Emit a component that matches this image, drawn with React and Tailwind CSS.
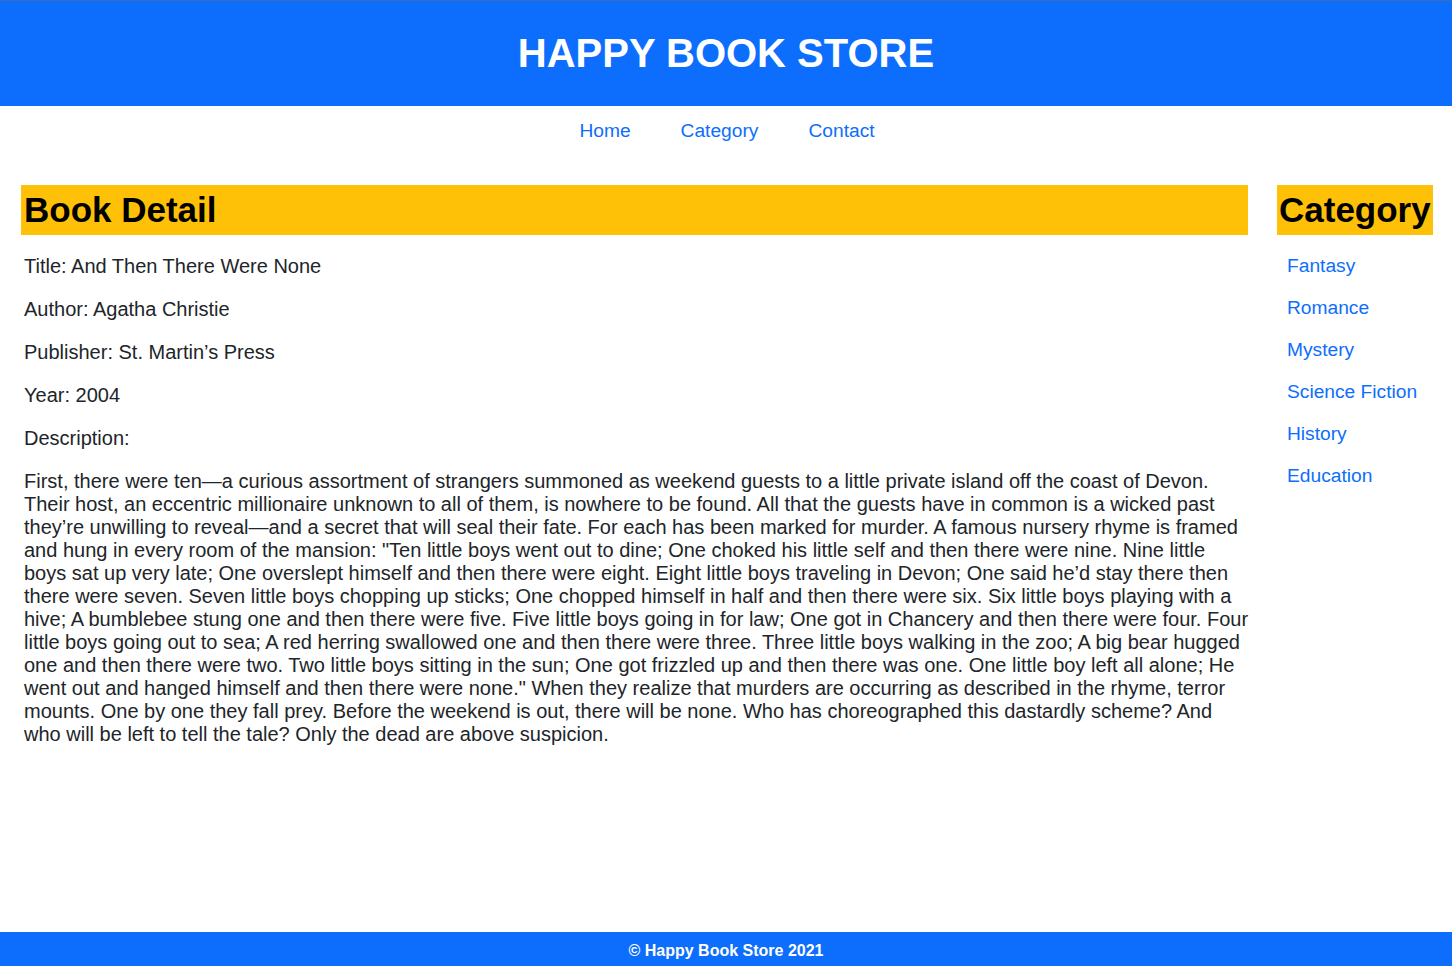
export default function App() {
  const cats = ["Fantasy", "Romance", "Mystery", "Science Fiction", "History", "Education"];
  const font = { fontFamily: '"Liberation Sans", Arial, sans-serif' };
  return (
    <div className="min-h-screen flex flex-col bg-white text-[#212529]" style={font}>
      <header className="h-[106px] bg-[#0d6efd] border-t border-[#3b6db3] flex items-center justify-center">
        <h1 className="text-[40px] font-bold text-white leading-[46px] m-0 -mt-[2px]">HAPPY BOOK STORE</h1>
      </header>
      <nav className="h-[49px] flex items-center justify-center gap-[50px] text-[19.2px] leading-[22px] text-[#0d6efd]">
        <a href="#" className="ml-[2px]">Home</a>
        <a href="#">Category</a>
        <a href="#">Contact</a>
      </nav>
      <main className="flex items-start pl-[21px] pr-[19px] mt-[30px] gap-[29px]">
        <section className="flex-1 min-w-0">
          <h2 className="bg-[#ffc107] text-black font-bold text-[35px] leading-[40px] py-[5px] px-[3px]">Book Detail</h2>
          <div className="pl-[3px] -mr-[2px] text-[20px] leading-[23px]">
            <p className="mt-[20px]">Title: And Then There Were None</p>
            <p className="mt-[20px]">Author: Agatha Christie</p>
            <p className="mt-[20px]">Publisher: St. Martin’s Press</p>
            <p className="mt-[20px]">Year: 2004</p>
            <p className="mt-[20px]">Description:</p>
            <p className="mt-[20px]">
              First, there were ten—a curious assortment of strangers summoned as weekend guests to a little private island off the coast of Devon. Their host, an eccentric millionaire unknown to all of them, is nowhere to be found. All that the guests have in common is a wicked past they’re unwilling to reveal—and a secret that will seal their fate. For each has been marked for murder. A famous nursery rhyme is framed and hung in every room of the mansion: "Ten little boys went out to dine; One choked his little self and then there were nine. Nine little boys sat up very late; One overslept himself and then there were eight. Eight little boys traveling in Devon; One said he’d stay there then there were seven. Seven little boys chopping up sticks; One chopped himself in half and then there were six. Six little boys playing with a hive; A bumblebee stung one and then there were five. Five little boys going in for law; One got in Chancery and then there were four. Four little boys going out to sea; A red herring swallowed one and then there were three. Three little boys walking in the zoo; A big bear hugged one and then there were two. Two little boys sitting in the sun; One got frizzled up and then there was one. One little boy left all alone; He went out and hanged himself and then there were none." When they realize that murders are occurring as described in the rhyme, terror mounts. One by one they fall prey. Before the weekend is out, there will be none. Who has choreographed this dastardly scheme? And who will be left to tell the tale? Only the dead are above suspicion.
            </p>
          </div>
        </section>
        <aside className="w-[156px] shrink-0">
          <h2 className="bg-[#ffc107] text-black font-bold text-[35px] leading-[40px] py-[5px] px-[2px] whitespace-nowrap">Category</h2>
          <ul className="pt-[20px] pl-[10px] flex flex-col gap-[20px] text-[19.2px] leading-[22px] text-[#0d6efd]">
            {cats.map((c) => (
              <li key={c}><a href="#">{c}</a></li>
            ))}
          </ul>
        </aside>
      </main>
      <footer className="mt-auto h-[34px] pt-[3px] bg-[#0d6efd] flex items-center justify-center text-white font-bold text-[16px]">
        © Happy Book Store 2021
      </footer>
    </div>
  );
}
